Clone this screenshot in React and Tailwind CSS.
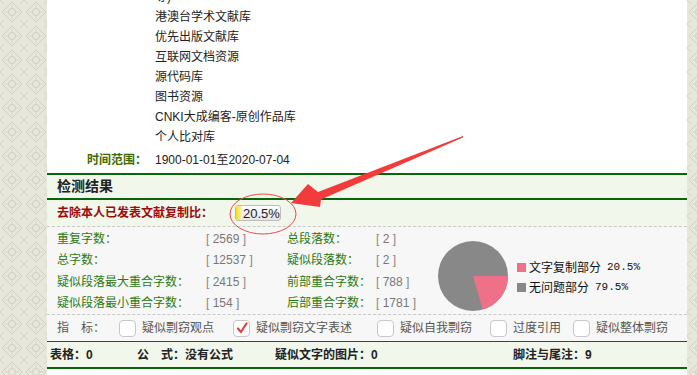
import React from "react";

const sources = [
  "等)",
  "港澳台学术文献库",
  "优先出版文献库",
  "互联网文档资源",
  "源代码库",
  "图书资源",
  "CNKI大成编客-原创作品库",
  "个人比对库",
];

const stats = [
  ["重复字数：", "2569", "总段落数：", "2"],
  ["总字数：", "12537", "疑似段落数：", "2"],
  ["疑似段落最大重合字数：", "2415", "前部重合字数：", "788"],
  ["疑似段落最小重合字数：", "154", "后部重合字数：", "1781"],
];

const indicators = [
  { label: "疑似剽窃观点", checked: false, w: "w-[114px]" },
  { label: "疑似剽窃文字表述", checked: true, w: "w-[144px]" },
  { label: "疑似自我剽窃", checked: false, w: "w-[113px]" },
  { label: "过度引用", checked: false, w: "w-[83px]" },
  { label: "疑似整体剽窃", checked: false, w: "w-[100px]" },
];

const Pattern = ({ id }) => (
  <svg className="w-full h-full block" xmlns="http://www.w3.org/2000/svg">
    <defs>
      <pattern id={id} width="24" height="24" patternUnits="userSpaceOnUse">
        <rect width="24" height="24" fill="#e8e7dc" />
        <path d="M12 2 L22 12 L12 22 L2 12 Z" fill="none" stroke="#d2cec1" strokeWidth="1" />
        <circle cx="12" cy="12" r="3.5" fill="none" stroke="#d2cec1" strokeWidth="1" />
        <path d="M0 0 L4 4 M24 0 L20 4 M0 24 L4 20 M24 24 L20 20" stroke="#d6d2c5" strokeWidth="1" />
        <path d="M12 5 L12 8 M12 16 L12 19 M5 12 L8 12 M16 12 L19 12" stroke="#d8d4c8" strokeWidth="1" />
      </pattern>
    </defs>
    <rect width="100%" height="100%" fill={`url(#${id})`} />
  </svg>
);

const Checkbox = ({ checked }) => (
  <span className="w-[17px] h-[17px] rounded-[4px] border border-[#c8c8c8] bg-white flex items-center justify-center shrink-0">
    {checked && (
      <svg width="12" height="12" viewBox="0 0 12 12">
        <path d="M2 6.5 L5 10 L10.5 1.5" fill="none" stroke="#e2453b" strokeWidth="2.2" strokeLinecap="round" strokeLinejoin="round" />
      </svg>
    )}
  </span>
);

const Pie = () => {
  const cx = 36, cy = 35, r = 35;
  const a = (20.5 / 100) * Math.PI * 2;
  const ex = cx + r * Math.cos(a);
  const ey = cy + r * Math.sin(a);
  return (
    <svg width="72" height="71" viewBox="0 0 72 71">
      <circle cx={cx} cy={cy} r={r} fill="#888888" />
      <path d={`M${cx} ${cy} L${cx + r} ${cy} A${r} ${r} 0 0 1 ${ex} ${ey} Z`} fill="#ee7189" />
    </svg>
  );
};

export default function App() {
  return (
    <div className="flex h-[375px] w-[697px] overflow-hidden bg-white font-['Liberation_Sans','Noto_Sans_CJK_SC',sans-serif] text-[12px]">
      <div className="w-[47px] h-full shrink-0">
        <Pattern id="pl" />
      </div>

      <main className="w-[640px] shrink-0 relative bg-white">
        {/* 检测范围 */}
        <div className="flex -mt-[13px]">
          <div className="w-[100px]" />
          <div className="pl-[8px] text-[#222]">
            {sources.map((s) => (
              <div key={s} className="h-[20px] leading-[20px]">{s}</div>
            ))}
          </div>
        </div>
        <div className="flex h-[20px] leading-[20px] mt-[3px] mb-[3px]">
          <div className="w-[100px] text-right font-bold text-[#3d6b05]">时间范围：</div>
          <div className="pl-[8px] text-[#222]">1900-01-01至2020-07-04</div>
        </div>

        {/* 检测结果 */}
        <div className="border-t-2 border-b-2 border-[#0b650b] bg-[#f2f7ec] h-[27px] flex items-center pl-[10px]">
          <span className="text-[14px] font-bold text-[#222]">检测结果</span>
        </div>
        <div className="bg-[#f2f7ec] h-[27px] flex items-center pl-[10px] border-b border-dashed border-[#c9c9c9]">
          <span className="font-bold text-[#9c0b0b]">去除本人已发表文献复制比：</span>
          <div className="ml-[22px] relative w-[46px] h-[16px] rounded-[3px] border border-[#bdbdbd] bg-gradient-to-b from-white to-[#e4e4e4] overflow-hidden flex items-center">
            <span className="absolute left-0 top-0 bottom-0 w-[6px] bg-gradient-to-r from-[#f0dc00] to-[#fff7a0]" />
            <span className="relative pl-[7px] text-[13px] leading-none text-[#222]">20.5%</span>
          </div>
        </div>

        <div className="bg-[#f7f7f7] flex h-[88px] border-b border-dashed border-[#c9c9c9]">
          <div className="grid grid-cols-[149px_81px_89px_54px] pl-[10px] pt-[1px] auto-rows-[21.5px] items-center">
            {stats.map((r) => (
              <React.Fragment key={r[0]}>
                <span className="text-[#2b7a10]">{r[0]}</span>
                <span className="text-[#888]">[ <span className="text-[#777]">{r[1]}</span> ]</span>
                <span className="text-[#2b7a10]">{r[2]}</span>
                <span className="text-[#888]">[ <span className="text-[#777]">{r[3]}</span> ]</span>
              </React.Fragment>
            ))}
          </div>
          <div className="flex pl-[7px] pt-[14px]">
            <Pie />
            <div className="ml-[8px] pt-[22px] flex flex-col gap-[11px] text-[#111]">
              <div className="flex items-center h-[9px]">
                <span className="w-[9px] h-[9px] bg-[#ee7189] mr-[3px]" />
                <span>文字复制部分</span>
                <span className="ml-[6px] font-['Liberation_Mono',monospace] text-[11px]">20.5%</span>
              </div>
              <div className="flex items-center h-[9px]">
                <span className="w-[9px] h-[9px] bg-[#888888] mr-[3px]" />
                <span>无问题部分</span>
                <span className="ml-[6px] font-['Liberation_Mono',monospace] text-[11px]">79.5%</span>
              </div>
            </div>
          </div>
        </div>

        {/* 指标 */}
        <div className="bg-[#f7f7f7] h-[27px] flex items-center pl-[10px] text-[#555] border-b border-[#0b650b]">
          <span className="w-[62px]">指　标：</span>
          {indicators.map((it) => (
            <label key={it.label} className={`${it.w} flex items-center gap-[6px]`}>
              <Checkbox checked={it.checked} />
              <span>{it.label}</span>
            </label>
          ))}
        </div>

        {/* 统计 */}
        <div className="bg-[#f2f7ec] h-[27px] flex items-center pl-[3px] font-semibold text-[#222] border-b-2 border-[#0b650b]">
          <span className="w-[87px]">表格：0</span>
          <span className="w-[138px]">公　式：没有公式</span>
          <span className="w-[238px]">疑似文字的图片：0</span>
          <span>脚注与尾注：9</span>
        </div>

        {/* annotation overlay */}
        <svg className="absolute inset-0 w-full h-full pointer-events-none" viewBox="0 0 640 375">
          <ellipse cx="216" cy="214" rx="33" ry="20" fill="none" stroke="#ee4a4a" strokeWidth="1" />
          <polygon
            points="244,203 261,184 271,192 416,136 416.5,137.3 274,199.5 273,207"
            fill="#f23c3c"
          />
        </svg>
      </main>

      <div className="w-[10px] h-full shrink-0">
        <Pattern id="pr" />
      </div>
    </div>
  );
}
